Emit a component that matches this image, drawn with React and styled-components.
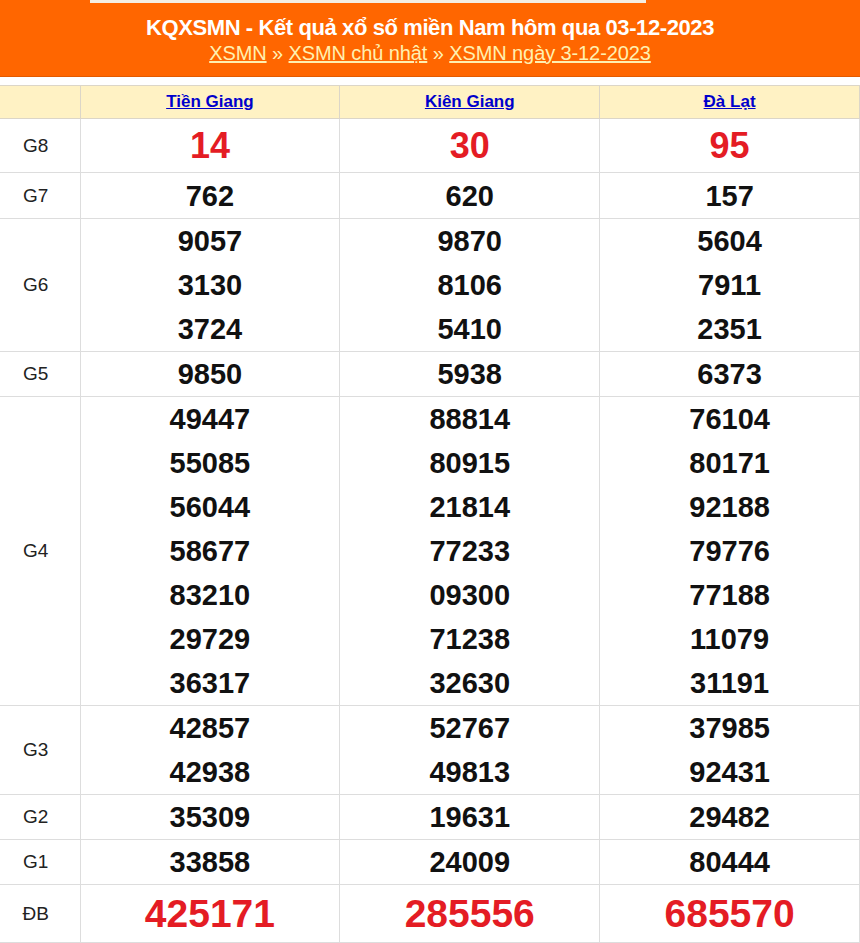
import React from "react";
import styled, { createGlobalStyle } from "styled-components";

const GlobalStyle = createGlobalStyle`
  body {
    margin: 0;
    background: #fff;
    font-family: "Liberation Sans", Arial, sans-serif;
  }
`;

const provinces = ["Tiền Giang", "Kiên Giang", "Đà Lạt"];

const prizes = [
  { label: "G8", size: "big", height: 54, values: [["14"], ["30"], ["95"]] },
  { label: "G7", height: 46, values: [["762"], ["620"], ["157"]] },
  {
    label: "G6",
    values: [
      ["9057", "3130", "3724"],
      ["9870", "8106", "5410"],
      ["5604", "7911", "2351"],
    ],
  },
  { label: "G5", values: [["9850"], ["5938"], ["6373"]] },
  {
    label: "G4",
    values: [
      ["49447", "55085", "56044", "58677", "83210", "29729", "36317"],
      ["88814", "80915", "21814", "77233", "09300", "71238", "32630"],
      ["76104", "80171", "92188", "79776", "77188", "11079", "31191"],
    ],
  },
  {
    label: "G3",
    values: [
      ["42857", "42938"],
      ["52767", "49813"],
      ["37985", "92431"],
    ],
  },
  { label: "G2", values: [["35309"], ["19631"], ["29482"]] },
  { label: "G1", values: [["33858"], ["24009"], ["80444"]] },
  { label: "ĐB", size: "special", height: 58, values: [["425171"], ["285556"], ["685570"]] },
];

const Page = styled.div`
  width: 860px;
`;

const Banner = styled.header`
  background: #ff6600;
  height: 77px;
  box-sizing: border-box;
  border-bottom: 1px solid #e35a00;
  text-align: center;
`;

const TopTab = styled.div`
  margin-left: 90px;
  width: 556px;
  height: 3px;
  background: #f4eee2;
`;

const Title = styled.h1`
  margin: 12px 0 0;
  color: #fff;
  font-size: 22px;
  line-height: 26px;
  font-weight: bold;
  letter-spacing: -0.4px;
`;

const Crumbs = styled.div`
  font-size: 20px;
  line-height: 24px;
  color: #fff2b8;
  letter-spacing: -0.1px;
`;

const Crumb = styled.a`
  color: #fff0b0;
  text-decoration: underline;
`;

const Table = styled.table`
  margin-top: 8px;
  width: 860px;
  table-layout: fixed;
  border-collapse: collapse;
`;

const HeadCell = styled.th`
  height: 32px;
  padding: 0;
  background: #fff2c4;
  border: 1px solid #dcd6c8;
  text-align: center;
  font-size: 17px;
  font-weight: bold;
  &:first-child {
    border-left: none;
  }
`;

const ProvinceLink = styled.a`
  color: #0000cc;
  text-decoration: underline;
`;

const Label = styled.td`
  padding: 0 8px 0 0;
  border: 1px solid #dddddd;
  border-left: none;
  text-align: center;
  font-size: 19px;
  color: #222;
`;

const Cell = styled.td`
  padding: 0;
  border: 1px solid #dddddd;
  text-align: center;
  vertical-align: middle;
`;

const Number = styled.div`
  font-weight: bold;
  line-height: ${(p) => (p.$size ? "52px" : "44px")};
  font-size: ${(p) => (p.$size === "special" ? "39px" : p.$size === "big" ? "36px" : "29px")};
  color: ${(p) => (p.$size ? "#e41c24" : "#111")};
`;

const App = () => {
  return (
    <Page>
      <GlobalStyle />
      <Banner>
        <TopTab />
        <Title>KQXSMN - Kết quả xổ số miền Nam hôm qua 03-12-2023</Title>
        <Crumbs>
          <Crumb href="#">XSMN</Crumb> » <Crumb href="#">XSMN chủ nhật</Crumb> »{" "}
          <Crumb href="#">XSMN ngày 3-12-2023</Crumb>
        </Crumbs>
      </Banner>
      <Table>
        <colgroup>
          <col style={{ width: 80 }} />
          <col />
          <col />
          <col />
        </colgroup>
        <thead>
          <tr>
            <HeadCell />
            {provinces.map((name) => (
              <HeadCell key={name}>
                <ProvinceLink href="#">{name}</ProvinceLink>
              </HeadCell>
            ))}
          </tr>
        </thead>
        <tbody>
          {prizes.map((prize) => (
            <tr key={prize.label} style={prize.height ? { height: prize.height } : undefined}>
              <Label>{prize.label}</Label>
              {prize.values.map((col, i) => (
                <Cell key={i}>
                  {col.map((num, j) => (
                    <Number key={j} $size={prize.size}>
                      {num}
                    </Number>
                  ))}
                </Cell>
              ))}
            </tr>
          ))}
        </tbody>
      </Table>
    </Page>
  );
};

export default App;
